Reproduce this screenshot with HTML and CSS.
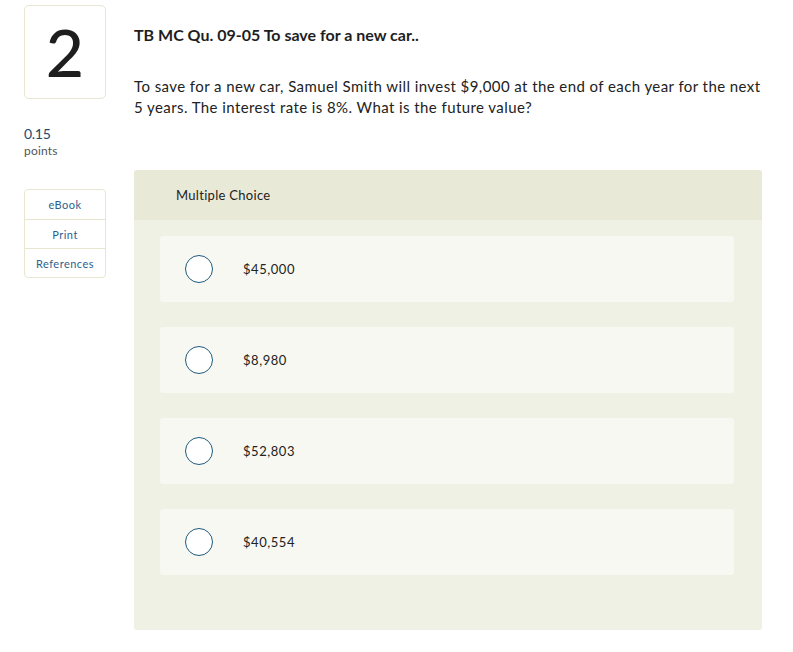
FILE: index.html
```html
<!DOCTYPE html>
<html lang="en">
<head>
<meta charset="utf-8">
<title>TB MC Qu. 09-05</title>
<link rel="stylesheet" href="styles.css">
</head>
<body>
<div class="page">
  <aside class="side">
    <div class="numbox">2</div>
    <div class="score">
      <div class="score-val">0.15</div>
      <div class="score-label">points</div>
    </div>
    <div class="tools">
      <div class="tool">eBook</div>
      <div class="tool">Print</div>
      <div class="tool">References</div>
    </div>
  </aside>
  <main class="main">
    <h1 class="title">TB MC Qu. 09-05 To save for a new car..</h1>
    <p class="question">To save for a new car, Samuel Smith will invest $9,000 at the end of each year for the next 5 years. The interest rate is 8%. What is the future value?</p>
    <section class="panel">
      <div class="panel-head">Multiple Choice</div>
      <div class="panel-body">
        <div class="option"><span class="radio"></span><span class="opt-text">$45,000</span></div>
        <div class="option"><span class="radio"></span><span class="opt-text">$8,980</span></div>
        <div class="option"><span class="radio"></span><span class="opt-text">$52,803</span></div>
        <div class="option"><span class="radio"></span><span class="opt-text">$40,554</span></div>
      </div>
    </section>
  </main>
</div>
</body>
</html>
```

FILE: styles.css
```css
* { box-sizing: border-box; }
html, body { margin: 0; padding: 0; background: #fff; }
body {
  font-family: Lato, "Open Sans", sans-serif;
  color: #222;
}
.page {
  display: flex;
  gap: 28px;
  padding: 5px 0 0 24px;
}
.side {
  width: 82px;
  flex: none;
}
.numbox {
  height: 94px;
  border: 1px solid #e8e6d0;
  border-radius: 5px;
  display: flex;
  align-items: center;
  justify-content: center;
  font-size: 66px;
  font-weight: 500;
  color: #1e1e1e;
  line-height: 1;
}
.score {
  margin-top: 26px;
}
.score-val {
  font-size: 14px;
  color: #1c4a6e;
  line-height: 18px;
  letter-spacing: -0.3px;
}
.score-label {
  font-size: 12px;
  color: #555;
  line-height: 16px;
  letter-spacing: 0.2px;
}
.tools {
  margin-top: 30px;
  border: 1px solid #e8e6d0;
  border-radius: 4px;
}
.tool {
  height: 29px;
  display: flex;
  align-items: center;
  justify-content: center;
  font-size: 11px;
  letter-spacing: 0.5px;
  color: #2c5f8e;
}
.tool + .tool { border-top: 1px solid #e8e6d0; }
.main {
  width: 628px;
  flex: none;
  padding-top: 19px;
}
.title {
  margin: 0;
  font-size: 16px;
  font-weight: 700;
  line-height: 22px;
  color: #1e1e1e;
}
.question {
  margin: 30px 0 0;
  font-size: 15px;
  line-height: 21px;
  letter-spacing: 0.42px;
  color: #222;
}
.panel {
  margin-top: 52px;
  background: #f0f1e5;
  border-radius: 3px;
}
.panel-head {
  height: 50px;
  background: #e9e9d7;
  border-radius: 3px 3px 0 0;
  padding-left: 42px;
  display: flex;
  align-items: center;
  font-size: 13px;
  letter-spacing: 0.3px;
  color: #222;
}
.panel-body {
  padding: 16px 28px 55px 26px;
  display: flex;
  flex-direction: column;
  gap: 25px;
}
.option {
  height: 66px;
  background: #f7f8f1;
  border-radius: 3px;
  display: flex;
  align-items: center;
  padding-left: 25px;
  gap: 30px;
}
.radio {
  width: 28px;
  height: 28px;
  border-radius: 50%;
  border: 1.5px solid #1f5a7c;
  background: #fff;
  flex: none;
}
.opt-text {
  font-size: 13px;
  letter-spacing: 0.55px;
  color: #222;
}
```
